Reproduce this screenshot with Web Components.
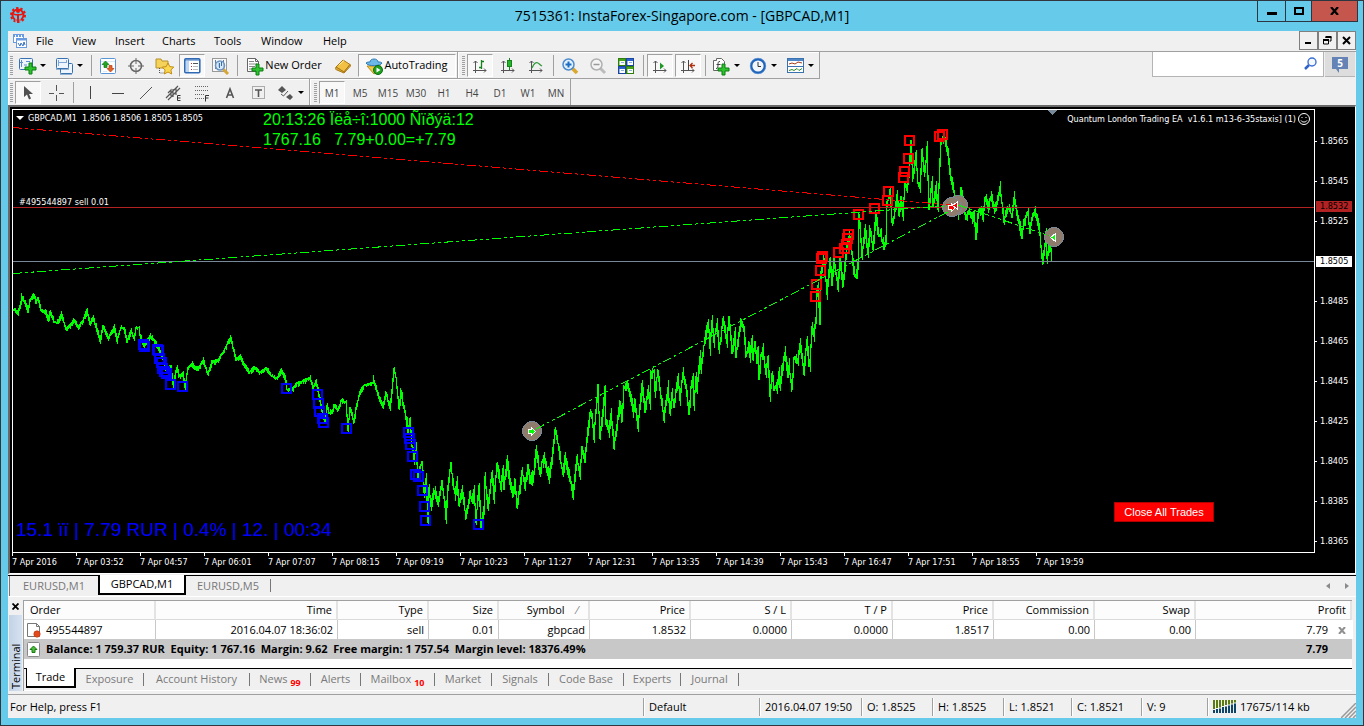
<!DOCTYPE html>
<html lang="en">
<head>
<meta charset="utf-8">
<title>7515361: InstaForex-Singapore.com - [GBPCAD,M1]</title>
<style>
html,body{margin:0;height:100%}
body{font:11px/16px "Open Sans","Noto Sans",sans-serif;color:#000;background:#66caea}
</style>
</head>
<body>
<trade-window>
  <title-bar slot="title">7515361: InstaForex-Singapore.com - [GBPCAD,M1]</title-bar>
  <menu-bar></menu-bar>
  <tool-area></tool-area>
  <price-chart></price-chart>
  <chart-tabs></chart-tabs>
  <trade-terminal></trade-terminal>
  <status-bar></status-bar>
</trade-window>
<script>
const define = (name, html, setup) => customElements.define(name, class extends HTMLElement {
  constructor() {
    super();
    const t = document.createElement('template');
    t.innerHTML = typeof html === 'function' ? '' : html;
    this.attachShadow({ mode: 'open' }).append(t.content.cloneNode(true));
    this._html = html;
  }
  connectedCallback() {
    if (typeof this._html === 'function') this.shadowRoot.innerHTML = this._html(this);
    if (setup) setup(this.shadowRoot, this);
  }
});

/* ---------- icons ---------- */
const plus = (x, y) => `<path d="M${x + 4} ${y}h3v4h4v3h-4v4h-3v-4h-4v-3h4z" fill="#2ec22e" stroke="#0b7d12"/>`;
const axes = '<path d="M3.5 3v12M1 12.500h13M1.500 5l2-2 2 2M12 10.500l2 2-2 2" fill="none" stroke="#555"/>';
const winbox = (x, y, w, h) => `<rect x="${x}.5" y="${y}.5" width="${w}" height="${h}" rx="1" fill="#eef5ff" stroke="#3a72b0"/>`;
const ICONS = {
  logo: '<g fill="none" stroke="#e8150f"><circle cx="8" cy="8" r="7" stroke-width="2" stroke-dasharray="2.400 1.998"/><circle cx="8" cy="8" r="5.500" stroke-width="2"/><path d="M8 7v9" stroke-width="2"/><path d="M3 6c1 2 3 2 5 1.500C10 8 12 8 13 6" stroke-width="1.500"/></g><circle cx="8" cy="4" r="2" fill="#e8150f"/><path d="M6 11v5M10 11v5" stroke="#66caea"/>',
  mdi: '<rect x="1.500" y="1.500" width="10" height="8" fill="#fff" stroke="#6a9be0"/><path d="M1 3h11" stroke="#6a9be0" stroke-width="2" stroke-dasharray="2 1"/><rect x="4.500" y="5.500" width="10" height="9" fill="#fff" stroke="#6a9be0"/><path d="M4 6.500h11" stroke="#6a9be0" stroke-width="2"/><path d="M6 10l2 3 1-3 2 3 1-4 1 3" fill="none" stroke="#3a72c0"/>',
  newchart: winbox(0, 0, 13, 11) + '<path d="M2.500 2v7M1 4.500h3M7 3.500h4M5 7h3" stroke="#5c8fcf"/>' + plus(6, 5),
  profiles: winbox(4, 5, 12, 10) + winbox(0, 0, 12, 10) + '<path d="M0 11h13M4 16h12" stroke="#3a72b0"/><path d="M2.500 2v6M2 4.500h8M10.500 2v3" stroke="#7fa5d5" fill="none"/>',
  market: '<rect x=".5" y=".5" width="15" height="15" rx="1" fill="#fff" stroke="#5b95d5"/><path d="M1 3.500h14M3 13.500h4" stroke="#dbe8f7"/><path d="M5.500 3L9 6.500H7v3H4v-3H2z" fill="#23a523" stroke="#0c7a10" stroke-width=".7"/><path d="M10.500 14L7 10.500h2v-3h3v3h2z" fill="#e5632b" stroke="#b43c10" stroke-width=".7"/>',
  target: '<circle cx="8" cy="8" r="5.500" fill="none" stroke="#666" stroke-width="1.500"/><path d="M8 0v6M8 10v6M0 8h6M10 8h6" stroke="#666"/>',
  favorites: '<path d="M0 1h5l1 2h6v7H0z" fill="#f5d35a" stroke="#b8902a"/><path d="M3.500 10v5h5" fill="none" stroke="#555" stroke-dasharray="1 1"/><path d="M12 5l1.800 3.600 4 .5-2.900 2.800.8 4.100-3.700-2-3.600 2 .7-4-2.900-2.900 4-.5z" fill="#fbd850" stroke="#c28d17"/>',
  navigator: '<rect x=".8" y=".8" width="15" height="14" rx="1" fill="#fff" stroke="#2f69b5" stroke-width="1.600"/><path d="M1 2h15" stroke="#2f69b5"/><rect x="2" y="3" width="3" height="11" fill="#bcd6f3"/><path d="M7 5.500h1M7 8.500h1M7 11.500h1" stroke="#a33"/><path d="M9 5.500h5" stroke="#555"/><path d="M9 8.500h5M9 11.500h5" stroke="#bbb"/>',
  tester: '<rect x=".5" y=".5" width="14" height="13" fill="#f8f8f8" stroke="#999"/><path d="M3.500 2v9M6.500 3v6M11.500 2v8" stroke="#5a7ea8"/><path d="M11 11l5 5" stroke="#d6a63a" stroke-width="3"/><circle cx="8" cy="7.500" r="4.500" fill="#cfe4f7" fill-opacity=".8" stroke="#6b93be" stroke-width="1.500"/><path d="M7.500 5v5M9.500 4v4" stroke="#3a72b0"/>',
  order: '<path d="M.5.5h8l3 3v10H.5z" fill="#fff" stroke="#666"/><path d="M8.500.5v3h3" fill="none" stroke="#666"/><path d="M2 3.500h5M2 6h8M2 8.500h6M2 11h4" stroke="#888"/>' + plus(5, 6),
  book: '<path d="M1 9l7-7 7 4.500-6 7.500z" fill="#f2c043" stroke="#a87813"/><path d="M1 9c-1 2 0 3 1 3l7 3 6.500-7-.5-1.500-6 7.500z" fill="#e3ae3c" stroke="#a87813"/><path d="M4 7l5-4.500" stroke="#fff0a8"/>',
  robot: '<path d="M1 8h14l-3 5-4 3z" fill="#f3c94a" stroke="#b98e20"/><path d="M0 5c1-1 3-1 4-1 0-4 8-4 8 0 2 0 3 0 4 1-1 3-14 4-16 0z" fill="#6cb8e6" stroke="#2c79b5"/><circle cx="12" cy="12" r="4.500" fill="#1fa01f" stroke="#0b6d10"/><path d="M10.500 9.500v5l4-2.500z" fill="#fff"/>',
  bars: axes + '<path d="M9.500 2v9M7 9.500h2M10 3.500h2" stroke="#16821a" stroke-width="1.300"/>',
  candles: axes + '<path d="M9.500 0v12" stroke="#16821a"/><rect x="7.500" y="2.500" width="4" height="6" fill="#25b52b" stroke="#16821a"/>',
  line: axes + '<path d="M4 10c2-5 4-6 6-5 1 .5 2 2 4 3" fill="none" stroke="#2c9a34" stroke-width="1.300"/>',
  zoomin: '<path d="M10 10l5 5" stroke="#d9a62e" stroke-width="3.500"/><circle cx="6.500" cy="6.500" r="5.500" fill="#e4f2ff" stroke="#4c8bcd" stroke-width="1.500"/><path d="M6.500 3.500v6M3.500 6.500h6" stroke="#1c6cc4" stroke-width="2"/>',
  zoomout: '<path d="M10 10l5 5" stroke="#bbb" stroke-width="3"/><circle cx="6.500" cy="6.500" r="5.500" fill="#f4f4f4" stroke="#b0b0b0" stroke-width="1.500"/><path d="M3.500 6.500h6" stroke="#999" stroke-width="1.500"/>',
  tile: '<g stroke-width="1"><rect x=".5" y=".5" width="7" height="7" fill="#46a51c" stroke="#2f7d0e"/><rect x="8.500" y=".5" width="7" height="7" fill="#2e62cc" stroke="#1b46a0"/><rect x=".5" y="8.500" width="7" height="7" fill="#2e62cc" stroke="#1b46a0"/><rect x="8.500" y="8.500" width="7" height="7" fill="#46a51c" stroke="#2f7d0e"/></g><g fill="#fff"><path d="M1.500 3h5.500v4H1.500zM9.500 3h5.500v4H9.500zM1.500 11h5.500v4H1.500zM9.500 11h5.500v4H9.500z"/></g><path d="M3 4.500h3M11 4.500h3M3 12.500h3M11 12.500h3" stroke="#8fb0dc"/>',
  scroll: axes + '<path d="M8 4.500v7l4-3.500z" fill="#1f9a28"/>',
  shift: axes + '<path d="M8.500 2v10" stroke="#444"/><path d="M15 7.500h-5M12.500 5l-2.500 2.500 2.500 2.500" fill="none" stroke="#b03010" stroke-width="1.300"/>',
  indicator: '<path d="M.5 2.500h3v-2h5l3 3v9H.5z" fill="#fff" stroke="#666"/><path d="M7 3.500c-2 0-2 1-2 3s0 4-2 4M3.500 6.500h4" fill="none" stroke="#444"/>' + plus(5, 6),
  clock: '<circle cx="8" cy="8" r="6.800" fill="#f2f7ff" stroke="#1f62b8" stroke-width="2.400"/><circle cx="8" cy="8" r="7.800" fill="none" stroke="#6aa2e0" stroke-width=".6"/><path d="M8 4v4.500h3" fill="none" stroke="#333"/>',
  template: '<rect x=".5" y=".5" width="16" height="14" fill="#fff" stroke="#3a72b0"/><path d="M1 2h15" stroke="#4e86c6" stroke-width="2"/><path d="M1 8.500h15" stroke="#3a72b0"/><path d="M2 6l3-1 3 1 3-2 4 1" fill="none" stroke="#a33a1a"/><path d="M2 12.500l3-1 2 1 3-2 2 2 3-2" fill="none" stroke="#2a8a2a"/>',
  cursor: '<path d="M4 1v11l3-2.500 2 5 2-1-2-4.500h4z" fill="#505050"/>',
  cross: '<path d="M8.500 0v6M8.500 10v6M1 8.500h5M11 8.500h5" stroke="#555"/>',
  vline: '<path d="M8.500 1v13" stroke="#444"/>',
  hline: '<path d="M2 8.500h12" stroke="#444"/>',
  trend: '<path d="M2 14L14 2" stroke="#555"/>',
  equi: '<path d="M0 13L12 1M2 15L14 3M2 8l3-3v6M7 4v8M10 3v7" fill="none" stroke="#555" stroke-width="1.200"/><path d="M14.500 10.500h-3v5h3M11.500 13h3" fill="none" stroke="#333"/>',
  fibo: '<path d="M1 1.500h14M1 5.500h14M1 9.500h9M1 13.500h9" stroke="#666" stroke-dasharray="1 1"/><path d="M15 10.500h-3.500v6M11.500 13h3" fill="none" stroke="#333"/>',
  text: '<path d="M4.500 13L8 4l3.500 9M5.500 10h5" fill="none" stroke="#555" stroke-width="1.600"/>',
  label: '<rect x="2.500" y="1.500" width="12" height="12" fill="none" stroke="#666" stroke-dasharray="1 1"/><path d="M5 5h7M8.500 5v7" stroke="#555" stroke-width="1.600"/>',
  arrows: '<path d="M5 1l4 4-4 3-4-3zM13 15l-4-3 4-3 3 3z" fill="#555"/><path d="M4 9l2.500 2L11 6" fill="none" stroke="#555"/>',
  search: '<path d="M6 9L2 13" stroke="#2f62c8" stroke-width="2.500"/><circle cx="9" cy="6" r="4" fill="#f4f8ff" stroke="#3c6fd4" stroke-width="1.400"/>',
  sell: '<path d="M.5 1.500h9l3 3v10H.5z" fill="#fff" stroke="#777"/><path d="M9.500 1.500v3h3" fill="none" stroke="#777"/><circle cx="10" cy="12" r="3.200" fill="#e04a1c" stroke="#b23409" stroke-width=".6"/>',
  balance: '<rect x=".5" y=".5" width="12" height="14" rx="1" fill="#fff" stroke="#888"/><path d="M6.500 4L10 7.500H8v3H5v-3H3z" fill="#4dbb3d" stroke="#187a10"/>',
  signal: '<g fill="#5b7a12"><path d="M0 0h2v9H0zM3 0h2v8H3zM6 0h2v7.500H6zM9 0h2v6H9zM12 0h2v5h-2zM15 0h2v4.500h-2zM18 0h2v3.500h-2zM21 0h2v2.500h-2z"/></g><g fill="#0d4468"><path d="M0 10h2v3H0zM3 9h2v4H3zM6 8.500h2V13H6zM9 7h2v6H9zM12 6.500h2V13h-2zM15 5.500h2V13h-2zM18 4.500h2V13h-2zM21 3.500h2V13h-2z"/></g>'
};
define('app-icon', el => {
  const w = el.getAttribute('w') || 16, h = el.getAttribute('h') || 16;
  return `<style>:host{display:block;white-space:normal;width:${w}px;height:${h}px;flex:none}svg{display:block;overflow:visible}</style>
  <svg width="${w}" height="${h}" viewBox="0 0 ${w} ${h}" aria-hidden="true">${ICONS[el.getAttribute('name')]}</svg>`;
});

/* ---------- window frame ---------- */
define('trade-window', `<style>
:host{display:flex;flex-direction:column;box-sizing:border-box;min-height:100vh;background:#66caea;border:1px solid #33373d;padding:0 7px 7px}
main{flex:1;display:flex;flex-direction:column;background:#f0f0f0}
</style><slot name="title"></slot><main><slot></slot></main>`);

define('title-bar', `<style>
:host{display:flex;height:30px;position:relative;justify-content:center;align-items:center;font-size:14px;line-height:20px}
app-icon{position:absolute;left:2px;top:6px}
h1{font:inherit;margin:0}
div{position:absolute;right:-2px;top:-1px;display:flex;border:1px solid #2b3640}
button{height:20px;width:28px;padding:0;border:0;border-right:1px solid #2b3640;background:none;display:grid;place-items:center}
button:nth-child(2){width:26px}
button:last-child{width:45px;background:#c4564e;border:0}
</style><app-icon name="logo"></app-icon><h1><slot></slot></h1>
<div><button aria-label="Minimize"><svg width="10" height="10"><path d="M0 6h10v3H0z"/></svg></button>
<button aria-label="Maximize"><svg width="10" height="8"><path d="M1 1h8v6H1z" fill="none" stroke="#000" stroke-width="2"/></svg></button>
<button aria-label="Close"><svg width="9" height="8"><path d="M1 0l7 8M8 0L1 8" stroke="#000" stroke-width="2.200"/></svg></button></div>`);

define('menu-bar', `<style>
:host{display:flex;height:20px;align-items:stretch;border-bottom:1px solid #a0a0a0;padding-left:4px}
nav{display:flex;flex:1}
button{font:inherit;color:inherit;border:0;background:none;padding:0 8px;text-align:left;white-space:nowrap}
app-icon{align-self:center}
div{display:flex}
div button{width:19px;height:19px;border:1px solid #7f7f7f;padding:0;display:grid;place-items:center}
</style><app-icon name="mdi"></app-icon>
<nav aria-label="Main"><button style="width:36px">File</button><button style="width:43px">View</button><button style="width:47px">Insert</button><button style="width:52px">Charts</button><button style="width:47px">Tools</button><button style="width:62px">Window</button><button style="width:43px">Help</button></nav>
<div><button aria-label="Minimize chart"><svg width="9" height="9"><path d="M1 6h6v2H1z"/></svg></button>
<button aria-label="Restore chart"><svg width="9" height="9"><path d="M3 2V1h5v4H6.500M.5 4h5v4h-5z" fill="none" stroke="#000"/><path d="M2.500 1h6M0 4h6" stroke="#000" stroke-width="2"/></svg></button>
<button aria-label="Close chart"><svg width="9" height="9"><path d="M1 1l7 7M8 1L1 8" stroke="#000" stroke-width="2"/></svg></button></div>`);

/* ---------- toolbars ---------- */
define('tool-button', el => `<style>
:host{display:block;flex:none;width:${el.getAttribute('w') || 28}px;height:26px}
button{box-sizing:border-box;margin:2px 1px 0;width:calc(100% - 2px);height:23px;padding:0 2px;font:inherit;color:inherit;border:1px solid transparent;background:none;display:flex;align-items:center;justify-content:center;gap:${el.hasAttribute('wide') ? 2 : 5}px;white-space:nowrap}
:host([pressed]) button{background:#f8f8f8;border-color:#a0a0a0 #fff #fff #a0a0a0}
i{border:3px solid transparent;border-top-color:#000;border-bottom:0}
span{padding-bottom:2px}
:host([period]){font-size:10px;color:#444}
:host([period]) span{padding:0}
</style><button aria-label="${el.getAttribute('label') || el.textContent}">${el.hasAttribute('icon') ? `<app-icon name="${el.getAttribute('icon')}"></app-icon>` : ''}${el.textContent ? '<span><slot></slot></span>' : ''}${el.hasAttribute('menu') ? '<i></i>' : ''}</button>`);

define('tool-strip', `<style>
:host{display:flex;height:26px;border-right:1px solid #a0a0a0;border-bottom:1px solid #a0a0a0;box-shadow:inset 1px 1px #fff;flex:none}
b{width:3px;margin:4px 1px 3px 2px;background:repeating-linear-gradient(#a0a0a0 0 1px,#f0f0f0 1px 2px)}
:host([inset]) b{margin-left:4px}
</style><b></b><slot></slot>`);
define('tool-sep', `<style>:host{flex:none;width:1px;height:21px;margin:3px 2px 0 3px;background:#a0a0a0}</style>`);

define('tool-area', `<style>
:host{display:grid;grid-template:27px 26px/1fr auto}
section{display:flex}
section:last-of-type{grid-column:1/-1}
aside{display:flex;height:25px;margin-right:1px}
label{display:flex;align-items:center;box-sizing:border-box;width:172px;background:#fff;border:1px solid #b4b4b4;border-top:0;padding-right:4px}
input{border:0;outline:0;background:none;flex:1;min-width:0;font:inherit}
aside button{width:30px;margin-left:1px;border:0;border-bottom:1px solid #b4b4b4;background:#ddd;padding:0;display:grid;place-items:center}
aside span{position:relative;width:16px;height:12px;margin-bottom:3px;background:#6583b5;color:#fff;font:bold 10px/12px "Open Sans",sans-serif}
aside span::after{content:"";position:absolute;left:4px;top:12px;border:solid transparent;border-width:0 0 4px 3px;border-top:4px solid #6583b5}
</style>
<section><tool-strip>
<tool-button w="37" icon="newchart" menu label="New chart"></tool-button><tool-button w="37" icon="profiles" menu label="Profiles"></tool-button><tool-sep></tool-sep>
<tool-button icon="market" label="Market watch"></tool-button><tool-button icon="target" label="Data window"></tool-button><tool-button icon="favorites" label="Navigator"></tool-button><tool-button icon="navigator" pressed label="Terminal"></tool-button><tool-button icon="tester" label="Strategy tester"></tool-button><tool-sep></tool-sep>
<tool-button w="89" icon="order" wide>New Order</tool-button><tool-button icon="book" label="Editor"></tool-button><tool-button w="100" icon="robot" wide pressed>AutoTrading</tool-button></tool-strip>
<tool-strip inset>
<tool-button icon="bars" pressed label="Bar chart"></tool-button><tool-button icon="candles" label="Candlesticks"></tool-button><tool-button icon="line" label="Line chart"></tool-button><tool-sep></tool-sep>
<tool-button icon="zoomin" label="Zoom in"></tool-button><tool-button icon="zoomout" label="Zoom out"></tool-button><tool-button icon="tile" label="Tile windows"></tool-button><tool-sep></tool-sep>
<tool-button icon="scroll" pressed label="Auto scroll"></tool-button><tool-button icon="shift" pressed label="Chart shift"></tool-button><tool-sep></tool-sep>
<tool-button w="37" icon="indicator" menu label="Indicators"></tool-button><tool-button w="37" icon="clock" menu label="Periods"></tool-button><tool-button w="37" icon="template" menu label="Templates"></tool-button></tool-strip></section>
<aside><label aria-label="Search"><input type="text"><app-icon name="search"></app-icon></label><button aria-label="Messages"><span>5</span></button></aside>
<section><tool-strip>
<tool-button icon="cursor" pressed label="Cursor"></tool-button><tool-button icon="cross" label="Crosshair"></tool-button><tool-sep></tool-sep>
<tool-button icon="vline" label="Vertical line"></tool-button><tool-button icon="hline" label="Horizontal line"></tool-button><tool-button icon="trend" label="Trendline"></tool-button><tool-button icon="equi" label="Equidistant channel"></tool-button><tool-button icon="fibo" label="Fibonacci"></tool-button><tool-button icon="text" label="Text"></tool-button><tool-button icon="label" label="Text label"></tool-button><tool-button w="37" icon="arrows" menu label="Arrows"></tool-button></tool-strip>
<tool-strip inset>
<tool-button period pressed>M1</tool-button><tool-button period>M5</tool-button><tool-button period>M15</tool-button><tool-button period>M30</tool-button><tool-button period>H1</tool-button><tool-button period>H4</tool-button><tool-button period>D1</tool-button><tool-button period>W1</tool-button><tool-button period>MN</tool-button></tool-strip></section>`);

/* ---------- chart ---------- */
const SWINGS = `13,309 17,313 21,298 23,300 27,311 29,300 33,294 35,302 37,298 40,310 45,313 47,319 49,312 53,321 57,323 60,314 63,322 65,329 69,325 73,319 77,327 82,320 86,310 89,324 92,317 97,333 99,341 102,326 107,338 113,327 116,340 120,327 123,328 126,341 130,330 133,338 135,328 138,327 139,335 143,345 149,336 153,340 158,350 162,358 165,370 170,365 172,384 176,367 178,376 182,373 184,387 187,367 191,364 193,368 197,369 202,360 207,374 211,361 217,360 223,350 229,338 231,343 235,359 239,356 243,365 248,372 253,367 258,372 265,368 270,375 276,378 280,370 284,378 286,389 292,388 296,383 302,381 309,377 312,387 315,381 318,395 321,410 324,422 326,405 328,412 331,413 333,405 337,410 340,401 345,402 347,429 349,408 353,422 355,408 359,392 363,385 368,383 373,382 378,397 382,407 385,392 389,408 391,390 393,368 395,377 398,408 400,390 402,403 405,417 407,430 409,420 411,445 413,457 415,447 417,477 419,467 421,462 423,492 425,478 427,520 428,487 430,505 433,490 437,502 441,481 443,497 445,517 447,487 450,463 452,483 454,493 456,483 458,503 461,490 465,517 469,493 472,502 473,490 475,520 478,487 480,525 483,507 484,478 487,508 491,472 493,497 496,465 500,487 502,468 503,487 506,460 509,483 512,495 514,480 516,505 519,487 521,470 524,485 527,465 529,482 531,473 532,482 535,450 539,473 541,462 543,458 548,477 551,457 554,430 557,443 559,457 562,472 564,458 567,473 570,483 572,495 576,457 579,475 581,448 584,460 586,437 589,412 591,417 593,437 595,410 597,387 599,437 601,420 604,388 605,423 608,430 610,413 613,445 615,433 619,402 621,420 623,387 626,385 628,390 632,410 634,400 637,427 641,385 644,410 647,390 649,402 650,372 653,370 654,390 657,370 659,390 663,417 667,387 669,412 671,393 673,405 677,378 679,398 682,372 685,387 688,413 690,387 692,378 693,403 695,378 696,388 699,357 700,367 702,353 704,337 707,323 708,330 709,348 711,322 713,340 716,323 718,347 720,338 722,318 724,330 726,342 728,316 731,352 734,332 735,355 737,340 740,320 743,330 745,355 748,343 749,355 751,340 752,357 754,343 756,362 757,348 758,378 760,355 762,350 765,373 767,357 769,395 771,373 773,388 776,388 778,372 779,385 781,368 784,353 787,375 788,365 791,389 793,358 797,362 799,343 803,372 804,358 806,340 808,365 809,365 811,327 813,335 815,317 816,290 817,287 819,323 820,273 822,260 824,268 826,292 829,260 831,283 833,258 837,287 839,260 842,285 845,253 848,237 851,253 853,273 856,277 857,263 858,215 861,255 864,230 867,252 869,228 872,247 875,213 877,233 880,235 883,247 885,237 886,203 889,192 891,220 893,217 896,195 898,213 900,197 902,215 904,183 906,190 908,170 910,142 911,162 912,178 915,153 917,183 919,187 921,150 923,170 925,162 926,147 928,208 931,182 932,205 935,188 937,207 939,160 940,140 943,137 947,153 949,173 952,187 955,200 957,212 960,188 962,203 965,218 968,210 971,217 973,213 975,238 977,213 980,208 982,217 984,198 987,205 990,197 993,208 996,203 999,187 1001,203 1003,222 1005,210 1008,208 1011,215 1013,198 1016,213 1018,223 1021,237 1023,220 1027,213 1029,232 1031,217 1034,210 1036,220 1039,233 1041,257 1042,262 1045,233 1046,257 1049,240 1051,259`.split(' ').map(p => p.split(',').map(Number));
const LOWS = '143,344 144,346 157,349 158,350 159,358 161,362 162,368 164,371 166,373 170,384 182,386 286,388 317,394 318,403 319,411 322,418 323,422 346,428 408,432 409,438 410,444 412,456 415,474 418,476 422,490 424,506 425,520 478,524';
const HIGHS = '942,134 939,136 909,140 908,158 904,171 903,177 888,191 887,200 874,208 858,214 848,234 847,238 846,244 844,248 838,252 822,256 821,258 820,270 816,284 815,296';
function priceBars() {
  let seed = 7, d = '', k = 0;
  const rnd = () => (seed = (seed * 16807) % 2147483647) / 2147483647;
  const at = x => {
    while (k < SWINGS.length - 2 && SWINGS[k + 1][0] <= x) k++;
    const [a, b] = [SWINGS[k], SWINGS[k + 1]];
    return a[1] + (b[1] - a[1]) * Math.min(1, (x - a[0]) / (b[0] - a[0]));
  };
  let prev = at(13);
  for (let x = 13; x <= 1051; x++) {
    const cur = at(x), reach = x < 400 ? 4 : 9;
    /* a bar leans back toward the middle of its swing, so peaks keep their height */
    const rising = cur < prev;
    const top = Math.round(Math.min(prev, cur) - rnd() * reach * (rising ? .3 : .8));
    const end = Math.round(Math.max(prev, cur) + rnd() * reach * (rising ? .8 : .3)) + 1;
    d += `M${x}.5 ${top}V${end}`;
    prev = cur;
  }
  return d + 'M21.5 293V305M49.500 311V321M373.500 375V384M597.500 385V400M604.500 388V400M626.500 381V390';
}
const squares = (s, c) => s.split(' ').map(p => { const [x, y] = p.split(','); return `<rect x="${x - 4}" y="${y - 4}" width="9" height="9" fill="none" stroke="${c}" stroke-width="2"/>`; }).join('');
const disc = (x, y) => `<circle cx="${x}" cy="${y}" r="9.500" fill="#8f7b6c" stroke="#778899"/>`;
const trend = (d, c) => `<path d="${d}" stroke="${c}" stroke-dasharray="9 3 3 3 3 3" fill="none"/>`;
const prices = ['1.8565','1.8545','1.8525','1.8505','1.8485','1.8465','1.8445','1.8425','1.8405','1.8385','1.8365'];
const times = ['7 Apr 2016','7 Apr 03:52','7 Apr 04:57','7 Apr 06:01','7 Apr 07:07','7 Apr 08:15','7 Apr 09:19','7 Apr 10:23','7 Apr 11:27','7 Apr 12:31','7 Apr 13:35','7 Apr 14:39','7 Apr 15:43','7 Apr 16:47','7 Apr 17:51','7 Apr 18:55','7 Apr 19:59'];
define('price-chart', el => `<style>
:host{flex:1;display:grid;grid-template:minmax(0,1fr) 20px/minmax(0,1fr) 40px;min-height:400px;background:#000;color:#fff;border:solid;border-width:2px 1px 1px 2px;border-color:#696969 #fff #fff #696969;padding:2px 0 0 2px;font:9px/12px "DejaVu Sans Condensed","DejaVu Sans",sans-serif}
.plot{position:relative;border:1px solid #fff;min-height:0}
.plot>svg{position:absolute;inset:0;width:100%;height:100%}
.over{position:absolute;white-space:pre}
.name{left:3px;top:2px}
.name::before{content:"";display:inline-block;border:4px solid transparent;border-top-color:#fff;border-bottom:0;margin-right:4px;vertical-align:1px}
.order{left:6px;top:86px}
.ea{right:3px;top:2px;display:flex;align-items:center;gap:1px}
.clock{left:250px;top:0;font:16px/20px "Liberation Sans",Arial,sans-serif;color:#0f0}
.info{left:3px;bottom:11px;font:19px/22px "Liberation Sans",Arial,sans-serif;color:#00f}
.close{right:100px;bottom:30px;box-sizing:border-box;width:100px;height:20px;padding:0;background:#f00;border:1px solid #b00000;color:#fff;font:11px/16px "Liberation Sans",Arial,sans-serif}
.prices{grid-row:1/3;grid-column:2;list-style:none;margin:0;padding:13px 3px 12px 1px;display:flex;flex-direction:column;position:relative}
.prices li{flex:1;display:flex;align-items:center}
.prices span{flex:1;padding-left:4px;line-height:11px}
.prices .now{background:#fff;color:#000}
.prices li:not(:has(.now)) span::before{content:"";position:absolute;left:0;width:2px;height:1px;margin-top:5px;background:#fff}
.tag{position:absolute;left:1px;right:3px;top:92px;line-height:11px;padding-left:4px;background:#b22222;color:#000}
.times{display:flex;list-style:none;margin:0;padding:0;overflow:hidden}
.times li{flex:none;width:64px;white-space:nowrap}
.times li::before{content:"";display:block;width:1px;height:3px;background:#fff}
</style>
<div class="plot">
<svg viewBox="13 110 1301 442" preserveAspectRatio="none" shape-rendering="crispEdges" role="img" aria-label="GBPCAD price chart">
<path d="${priceBars()}" stroke="#0f0" fill="none"/>
<path d="M13 207.500H1314" stroke="#b22222"/><path d="M13 261.500H1314" stroke="#778899"/>
${squares(LOWS, '#00f')}${squares(HIGHS, '#f00')}
${disc(532, 431)}${disc(958, 205)}${disc(952, 207)}${disc(1054, 237)}
${trend('M13 127.500L952 205', '#f00')}${trend('M13 273.500L958 205', '#0f0')}${trend('M536 429L957 207', '#0f0')}${trend('M958 205L1050 236', '#0f0')}
<g stroke-width="1"><path d="M528.500 429.500h3v-2l4 4-4 4v-2h-3z" fill="#0f0" stroke="#fff"/>
<path d="M948.500 205.500h3v-2l4 4-4 4v-2h-3z" fill="#f00" stroke="#fff"/><path d="M957.500 202v7l-5-3.500z" fill="#f00" stroke="#fff"/>
<path d="M1055.500 233.500v8l-5-4z" fill="#0f0" stroke="#fff"/></g>
<path d="M1047 110h10l-5 5z" fill="#778899"/></svg>
<div class="over name">GBPCAD,M1  1.8506 1.8506 1.8505 1.8505</div>
<div class="over clock">20:13:26 Ïëå÷î:1000 Ñïðýä:12
1767.16   7.79+0.00=+7.79</div>
<div class="over order">#495544897 sell 0.01</div>
<div class="over ea"><span>Quantum London Trading EA  v1.6.1 m13-6-35staxis] (1)</span><svg width="14" height="14" viewBox="0 0 14 14" fill="none" stroke="#fff"><circle cx="7" cy="7" r="5.500"/><path d="M4 8.500c1 2 5 2 6 0M4.500 5.500h1M8.500 5.500h1"/></svg></div>
<div class="over info">15.1 ïï | 7.79 RUR | 0.4% | 12. | 00:34</div>
<button class="over close">Close All Trades</button>
</div>
<ul class="prices">${prices.map(p => `<li><span${p === '1.8505' ? ' class="now"' : ''}>${p}</span></li>`).join('')}<div class="tag">1.8532</div></ul>
<ul class="times">${times.map(t => `<li>${t}</li>`).join('')}</ul>`);

/* ---------- chart tabs ---------- */
define('chart-tabs', `<style>
:host{display:flex;height:20px;border-top:1px solid #000;border-bottom:1px solid #fff;margin-top:1px;padding-left:1px;color:#777}
nav{display:flex;flex:1;border-left:1px solid #777}
button{box-sizing:border-box;width:84px;height:19px;padding:0;border:0;background:none;font:inherit;color:inherit;text-align:center}
.first{width:88px}
.on{width:88px;margin-top:-1px;height:20px;background:#fff;color:#000;border:1px solid #000;border-width:0 2px 2px}
i{width:1px;height:13px;margin-top:3px;background:#777}
div{display:flex;width:38px}
div button{width:19px;display:grid;place-items:center}
</style><nav><button class="first">EURUSD,M1</button><button class="on">GBPCAD,M1</button><button>EURUSD,M5</button><i></i></nav>
<div><button aria-label="Scroll tabs left"><svg width="4" height="6"><path d="M4 0v6L0 3z" fill="#8a8a8a"/></svg></button><button aria-label="Scroll tabs right"><svg width="4" height="6"><path d="M0 0v6l4-3z" fill="#8a8a8a"/></svg></button></div>`);

/* ---------- terminal ---------- */
define('terminal-tab', el => `<style>
:host{display:flex;flex:none;width:${el.getAttribute('w')}px;height:19px}
button{flex:1;padding:0;border:0;background:none;font:inherit;color:#7a7a7a;white-space:nowrap;display:flex;align-items:center;justify-content:center;gap:3px}
i{width:1px;height:13px;margin-top:4px;background:#777}
b{font:bold 9px/10px "Open Sans",sans-serif;color:#f00;margin-top:8px}
:host([on]) button{margin-top:-1px;background:#fff;color:#000;border:solid #000;border-width:0 2px 2px 1px}
:host([on]) i{display:none}
</style><button><slot></slot>${el.hasAttribute('count') ? `<b>${el.getAttribute('count')}</b>` : ''}</button><i></i>`);

define('trade-terminal', `<style>
:host{display:grid;grid-template-columns:15px minmax(0,1fr);padding:3px 4px 3px 0;border-bottom:1px solid #a0a0a0}
aside{display:flex;flex-direction:column;align-items:center}
aside button{width:10px;height:10px;padding:0;margin:1px 0 4px;border:0;background:none;display:grid;place-items:center}
aside span{flex:1;width:13px;box-sizing:border-box;writing-mode:vertical-rl;transform:rotate(180deg);line-height:13px;padding-top:2px;background:linear-gradient(90deg,#d5e2f0,#c3d2e6)}
section{border:solid #a0a0a0;border-width:1px 0 0 1px;display:flex;flex-direction:column;background:#fff}
table{width:100%;border-collapse:separate;border-spacing:0;table-layout:fixed}
th,td{box-sizing:border-box;padding:0 4px 0 0;text-align:right;font-weight:400;white-space:nowrap;overflow:hidden}
th{height:19px;background:#fcfcfc;border-right:2px solid #e3e3e3;border-bottom:1px solid #dadada;padding-right:4px}
tbody td{height:19px;border-right:1px solid #c8c8c8;box-shadow:1px 0 #fff}
th:first-child,td:first-child{text-align:left;padding-left:6px}
tbody td:last-child{border:0}
.cell{display:flex;align-items:center;gap:6px}
td:first-child{padding-left:3px}
.symbol{padding-right:10px}
.symbol i{margin-left:12px;color:#777;font-style:normal}
.profit{padding-right:4px}
tbody .profit,tfoot .profit{padding-right:24px;position:relative}
td button{position:absolute;right:6px;top:7px;width:8px;height:8px;border:0;padding:0;background:none;display:grid}
tfoot td{height:20px;background:#c8c8c8;font-weight:700;white-space:pre}
.gap{height:9px}
nav{display:flex;height:23px;padding-left:2px;border-top:1px solid #000;background:#f0f0f0;border-bottom:1px solid #fff;box-sizing:border-box}
nav::after{content:"";flex:1}
</style>
<aside><button aria-label="Close terminal"><svg width="7" height="7"><path d="M0.500 0.500l6 6M6.500 0.500l-6 6" stroke="#000" stroke-width="1.800"/></svg></button><span>Terminal</span></aside>
<section><table>
<colgroup><col style="width:132px"><col style="width:182px"><col style="width:91px"><col style="width:70px"><col style="width:91px"><col style="width:101px"><col style="width:101px"><col style="width:101px"><col style="width:101px"><col style="width:101px"><col style="width:101px"><col></colgroup>
<thead><tr><th>Order</th><th>Time</th><th>Type</th><th>Size</th><th class="symbol">Symbol<i>⁄</i></th><th>Price</th><th>S / L</th><th>T / P</th><th>Price</th><th>Commission</th><th>Swap</th><th class="profit">Profit</th></tr></thead>
<tbody><tr><td><div class="cell"><app-icon name="sell" w="13" h="15"></app-icon>495544897</div></td><td>2016.04.07 18:36:02</td><td>sell</td><td>0.01</td><td>gbpcad</td><td>1.8532</td><td>0.0000</td><td>0.0000</td><td>1.8517</td><td>0.00</td><td>0.00</td><td class="profit">7.79<button aria-label="Close order"><svg width="8" height="7"><path d="M1 0l6 7M7 0L1 7" stroke="#909090" stroke-width="2"/></svg></button></td></tr></tbody>
<tfoot><tr><td colspan="11"><div class="cell"><app-icon name="balance" w="13" h="15"></app-icon><span>Balance: 1 759.37 RUR  Equity: 1 767.16  Margin: 9.62  Free margin: 1 757.54  Margin level: 18376.49%</span></div></td><td class="profit">7.79</td></tr></tfoot>
</table><div class="gap"></div>
<nav aria-label="Terminal"><terminal-tab on w="50">Trade</terminal-tab><terminal-tab w="68">Exposure</terminal-tab><terminal-tab w="106">Account History</terminal-tab><terminal-tab w="61" count="99">News</terminal-tab><terminal-tab w="50">Alerts</terminal-tab><terminal-tab w="74" count="10">Mailbox</terminal-tab><terminal-tab w="57">Market</terminal-tab><terminal-tab w="57">Signals</terminal-tab><terminal-tab w="75">Code Base</terminal-tab><terminal-tab w="57">Experts</terminal-tab><terminal-tab w="58">Journal</terminal-tab></nav></section>`);

/* ---------- status bar ---------- */
define('status-bar', `<style>
:host{display:flex;height:23px;align-items:center;position:relative}
span{box-sizing:border-box;height:18px;line-height:18px;border-left:1px solid #a0a0a0;padding-left:5px;flex:none;white-space:nowrap;box-shadow:inset 1px 0 #fff}
span:first-of-type{flex:1;border:0;padding-left:2px;box-shadow:none}
.net{display:flex;align-items:center;gap:4px}
svg{position:absolute;right:0;bottom:0}
</style><span>For Help, press F1</span><span style="width:116px">Default</span><span style="width:102px">2016.04.07 19:50</span><span style="width:71px">O: 1.8525</span><span style="width:71px">H: 1.8525</span><span style="width:68px">L: 1.8521</span><span style="width:70px">C: 1.8521</span><span style="width:66px">V: 9</span><span class="net" style="width:149px"><app-icon name="signal" w="23" h="13"></app-icon>17675/114 kb</span>
<svg width="15" height="15"><path d="M0 15L15 0M4 15L15 4M8 15l7-7M12 15l3-3" stroke="#999" stroke-width="1.500"/></svg>`);
</script>
</body>
</html>
